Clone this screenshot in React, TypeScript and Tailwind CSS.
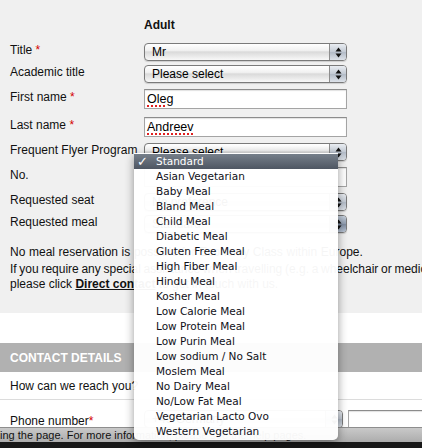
import React from "react";

function Stepper({ dark }: { dark?: boolean }) {
  return (
    <span
      className={
        "flex w-[17px] items-center justify-center rounded-r-[3px] border-l border-[#8d8d8d] " +
        (dark
          ? "bg-[linear-gradient(to_bottom,#c6d0dd,#93a0b2_48%,#7f8ca0_52%,#b6c2d2)]"
          : "bg-[linear-gradient(to_bottom,#e9edf2,#c4cbd5_48%,#b2bbc7_52%,#dde2e9)]")
      }
    >
      <svg width="7" height="11" viewBox="0 0 7 11">
        <path d="M3.5 0.5 L6.5 4.5 L0.5 4.5 Z" fill="#111" />
        <path d="M0.5 6.5 L6.5 6.5 L3.5 10.5 Z" fill="#111" />
      </svg>
    </span>
  );
}

function Select({ value, w = "w-[203px]", dark }: { value: string; w?: string; dark?: boolean }) {
  return (
    <div
      className={
        "flex h-[18px] shrink-0 items-stretch rounded-[4px] border border-[#7a7a7a] bg-[linear-gradient(to_bottom,#ffffff,#f1f1f1_40%,#dadada_50%,#e9e9e9_75%,#f8f8f8)] shadow-[0_1px_1px_rgba(0,0,0,0.15)] " +
        w
      }
    >
      <span className="flex-1 overflow-hidden whitespace-nowrap pl-[7px] text-[12px] leading-[16px] text-black">
        {value}
      </span>
      <Stepper dark={dark} />
    </div>
  );
}

function Input({ value, w = "w-[203px]", spell }: { value?: string; w?: string; spell?: boolean }) {
  return (
    <div
      className={
        "flex h-[20px] shrink-0 items-center border border-[#a4a4a4] border-t-[#8c8c8c] bg-white pl-[2px] shadow-[inset_0_1px_1px_rgba(0,0,0,0.12)] " +
        w
      }
    >
      {value ? (
        <span
          className={
            "text-[12.5px] leading-[16px] text-black " +
            (spell ? "underline decoration-dotted decoration-[#e02020] decoration-2 underline-offset-[2px]" : "")
          }
        >
          {value}
        </span>
      ) : null}
    </div>
  );
}

function Req() {
  return <span className="text-[#d40000]">*</span>;
}

function Row({ label, children, mt }: { label: React.ReactNode; children: React.ReactNode; mt: string }) {
  return (
    <div className={"flex items-center " + mt}>
      <div className="w-[134px] shrink-0 whitespace-nowrap pb-[3px] text-[12px] leading-[15px]">{label}</div>
      {children}
    </div>
  );
}

const meals = [
  "Standard",
  "Asian Vegetarian",
  "Baby Meal",
  "Bland Meal",
  "Child Meal",
  "Diabetic Meal",
  "Gluten Free Meal",
  "High Fiber Meal",
  "Hindu Meal",
  "Kosher Meal",
  "Low Calorie Meal",
  "Low Protein Meal",
  "Low Purin Meal",
  "Low sodium / No Salt",
  "Moslem Meal",
  "No Dairy Meal",
  "No/Low Fat Meal",
  "Vegetarian Lacto Ovo",
  "Western Vegetarian",
];

export default function App() {
  return (
    <div className="relative flex h-[448px] w-[422px] flex-col overflow-hidden bg-[#f0f0f0] font-['Liberation_Sans',Arial,sans-serif] text-[#111]">
      <div className="h-[427px] shrink-0 overflow-hidden">
        <div className="pl-[10px]">
          <div className="pl-[134px] pt-[18px] text-[12px] font-bold leading-[15px]">Adult</div>
          <div className="flex flex-col">
            <Row mt="mt-[10px]" label={<>Title <Req /></>}>
              <Select value="Mr" />
            </Row>
            <Row mt="mt-[4px]" label="Academic title">
              <Select value="Please select" />
            </Row>
            <Row mt="mt-[6px]" label={<>First name <Req /></>}>
              <Input value="Oleg" spell />
            </Row>
            <Row mt="mt-[8px]" label={<>Last name <Req /></>}>
              <Input value="Andreev" spell />
            </Row>
            <Row mt="mt-[6px]" label="Frequent Flyer Program">
              <Select value="Please select" />
            </Row>
            <Row mt="mt-[6px]" label="No.">
              <Input />
            </Row>
            <Row mt="mt-[6px]" label="Requested seat">
              <Select value="No preference" />
            </Row>
            <Row mt="mt-[4px]" label="Requested meal">
              <Select value="Standard" dark />
            </Row>
          </div>
          <div className="mt-[12px] whitespace-nowrap text-[12px] leading-[15px] [word-spacing:0.3px]">
            No meal reservation is possible for Economy Class within Europe.
          </div>
          <div className="mt-[2px] whitespace-nowrap text-[12px] leading-[15px] [word-spacing:-0.65px]">
            If you require any special assistance when travelling (e.g. a wheelchair or medical equipment),
          </div>
          <div className="whitespace-nowrap text-[12px] leading-[15px]">
            please click <span className="font-bold underline">Direct contact</span> to get in touch with us.
          </div>
        </div>
        <div className="mt-[21px] h-[30px] bg-white" />
        <div className="flex h-[29px] items-center bg-[#b1b1b1] pl-[10px] text-[12px] font-bold text-white">
          CONTACT DETAILS
        </div>
        <div className="flex h-[28px] items-center border-b border-[#dcdcdc] bg-white pl-[10px] text-[12px]">
          How can we reach you?
        </div>
        <div className="flex h-[40px] items-start bg-white pl-[10px] pt-[10px]">
          <div className="w-[134px] shrink-0 pt-[4px] text-[12px] leading-[15px]">
            Phone number<Req />
          </div>
          <Select value="+49 Germany" w="w-[199px]" />
          <div className="ml-[5px]">
            <Input w="w-[120px]" />
          </div>
        </div>
      </div>
      <div className="flex h-[15px] shrink-0 items-center overflow-hidden whitespace-nowrap border-t border-[#8e8e8e] bg-[linear-gradient(to_bottom,#c9c9c9,#acacac)] text-[11px] leading-[14px] text-[#111]">
        ing the page. For more information, please see the help pages.
      </div>
      <div className="flex-1 bg-[#181818]" />

      <div className="absolute left-[134px] top-[153px] w-[204px] rounded-b-[5px] bg-white/[0.96] py-px font-['DejaVu_Sans',sans-serif] text-[10.5px] text-[#101018] shadow-[0_3px_10px_rgba(0,0,0,0.4)]">
        {meals.map((m, i) =>
          i === 0 ? (
            <div
              key={m}
              className="relative flex h-[15px] items-center bg-[linear-gradient(to_bottom,#767f8a,#4e5662)] pl-[22px] text-white"
            >
              <span className="absolute left-[3px] top-0 text-[13px] font-bold leading-[15px]">✓</span>
              {m}
            </div>
          ) : (
            <div key={m} className="flex h-[15px] items-center pl-[22px]">
              {m}
            </div>
          )
        )}
      </div>
    </div>
  );
}
